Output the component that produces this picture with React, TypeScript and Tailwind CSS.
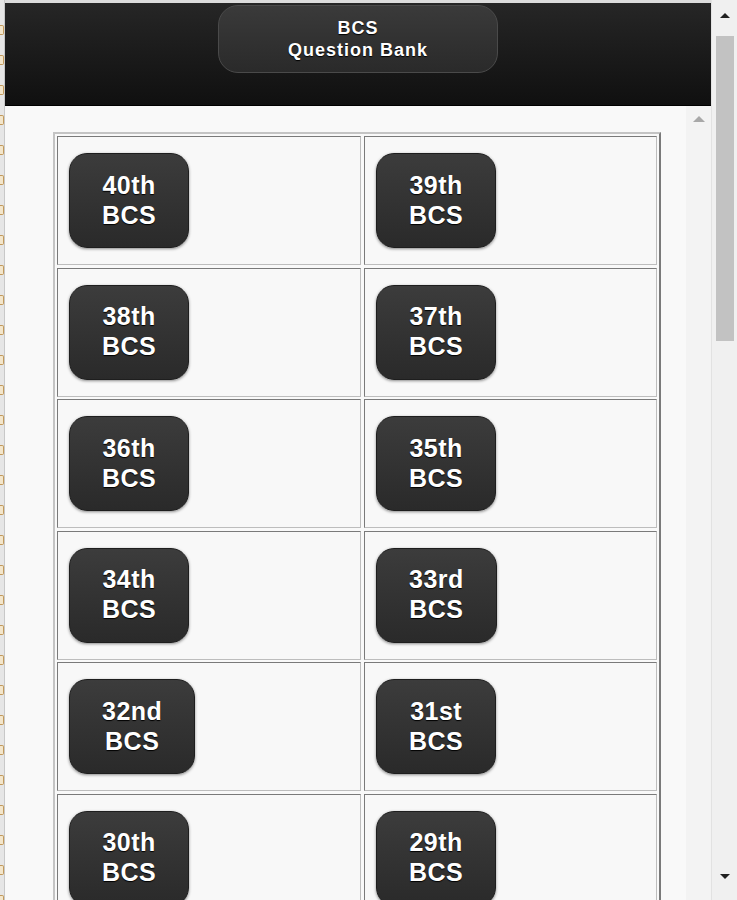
import React from 'react';

const exams = [
  ['40th', '39th'],
  ['38th', '37th'],
  ['36th', '35th'],
  ['34th', '33rd'],
  ['32nd', '31st'],
  ['30th', '29th'],
];

const font = { fontFamily: '"Liberation Sans", Arial, sans-serif' };

const ExamButton: React.FC<{ label: string }> = ({ label }) => (
  <button className="inline-flex h-[95px] shrink-0 flex-col items-center justify-center rounded-[18px] border border-[#1e1e1e] bg-gradient-to-b from-[#3c3c3c] to-[#2a2a2a] px-[32px] pb-[2px] text-[25px] font-bold leading-[30px] tracking-[0.5px] text-white shadow-[0_1px_3px_rgba(0,0,0,0.45)] [text-shadow:0_1px_1px_#000]">
    <span>{label}</span>
    <span>BCS</span>
  </button>
);

export default function App(): JSX.Element {
  const marks = Array.from({ length: 30 });

  return (
    <div className="flex h-[900px] w-[737px] overflow-hidden bg-[#f0f0f0]" style={font}>
      {/* edge of the window behind */}
      <div className="flex w-[5px] shrink-0 flex-col gap-[20px] overflow-hidden border-r border-[#c8c8c8] bg-[#e6e6e6] pt-[25px]">
        {marks.map((_, i) => (
          <div key={i} className="h-[10px] w-[4px] shrink-0 rounded-r-[2px] border border-l-0 border-[#c29a5c] bg-[#f3e6cc]" />
        ))}
      </div>

      <div className="flex min-w-0 flex-1 flex-col overflow-hidden">
        <div className="h-[3px] shrink-0 bg-[#dcdcdc]" />
        <header className="flex h-[103px] shrink-0 justify-center border-b border-black bg-gradient-to-b from-[#262626] to-[#101010] pt-[2px]">
          <button className="flex h-[68px] w-[280px] flex-col items-center justify-center rounded-[20px] border border-[#4a4a4a] bg-gradient-to-b from-[#3a3a3a] to-[#2a2a2a] text-[18px] font-bold leading-[22px] tracking-[1px] text-white [text-shadow:0_1px_1px_#000]">
            <span>BCS</span>
            <span>Question Bank</span>
          </button>
        </header>

        <div className="flex flex-1 bg-[#f9f9f9]">
          <div className="flex-1 pl-[48px] pt-[26px]">
            <div className="w-[608px] border-2 border-t-[#c4c4c4] border-l-[#c4c4c4] border-r-[#7a7a7a] border-b-[#7a7a7a] p-[2px]">
              <div className="grid grid-cols-[304px_293px] gap-x-[3px] gap-y-[2.6px]">
                {exams.flat().map((label) => (
                  <div
                    key={label}
                    className="flex h-[129px] items-center border border-t-[#7a7a7a] border-l-[#7a7a7a] border-r-[#bdbdbd] border-b-[#bdbdbd] bg-[#f8f8f8] pl-[11px]"
                  >
                    <ExamButton label={label} />
                  </div>
                ))}
              </div>
            </div>
          </div>
          <div className="flex w-[25px] shrink-0 justify-center bg-[#f3f3f3] pt-[10px]">
            <div className="h-0 w-0 border-x-[6px] border-b-[6px] border-x-transparent border-b-[#a8a8a8]" />
          </div>
        </div>
      </div>

      {/* window scrollbar */}
      <div className="flex w-[26px] shrink-0 flex-col items-center border-l border-[#e2e2e2] bg-[#f0f0f0]">
        <div className="flex h-[30px] items-center">
          <div className="h-0 w-0 border-x-[5px] border-b-[5px] border-x-transparent border-b-[#202020]" />
        </div>
        <div className="mt-[6px] h-[305px] w-[18px] bg-[#c2c2c2]" />
        <div className="flex-1" />
        <div className="flex h-[28px] items-start pt-[2px]">
          <div className="h-0 w-0 border-x-[5px] border-t-[5px] border-x-transparent border-t-[#202020]" />
        </div>
      </div>
    </div>
  );
}
